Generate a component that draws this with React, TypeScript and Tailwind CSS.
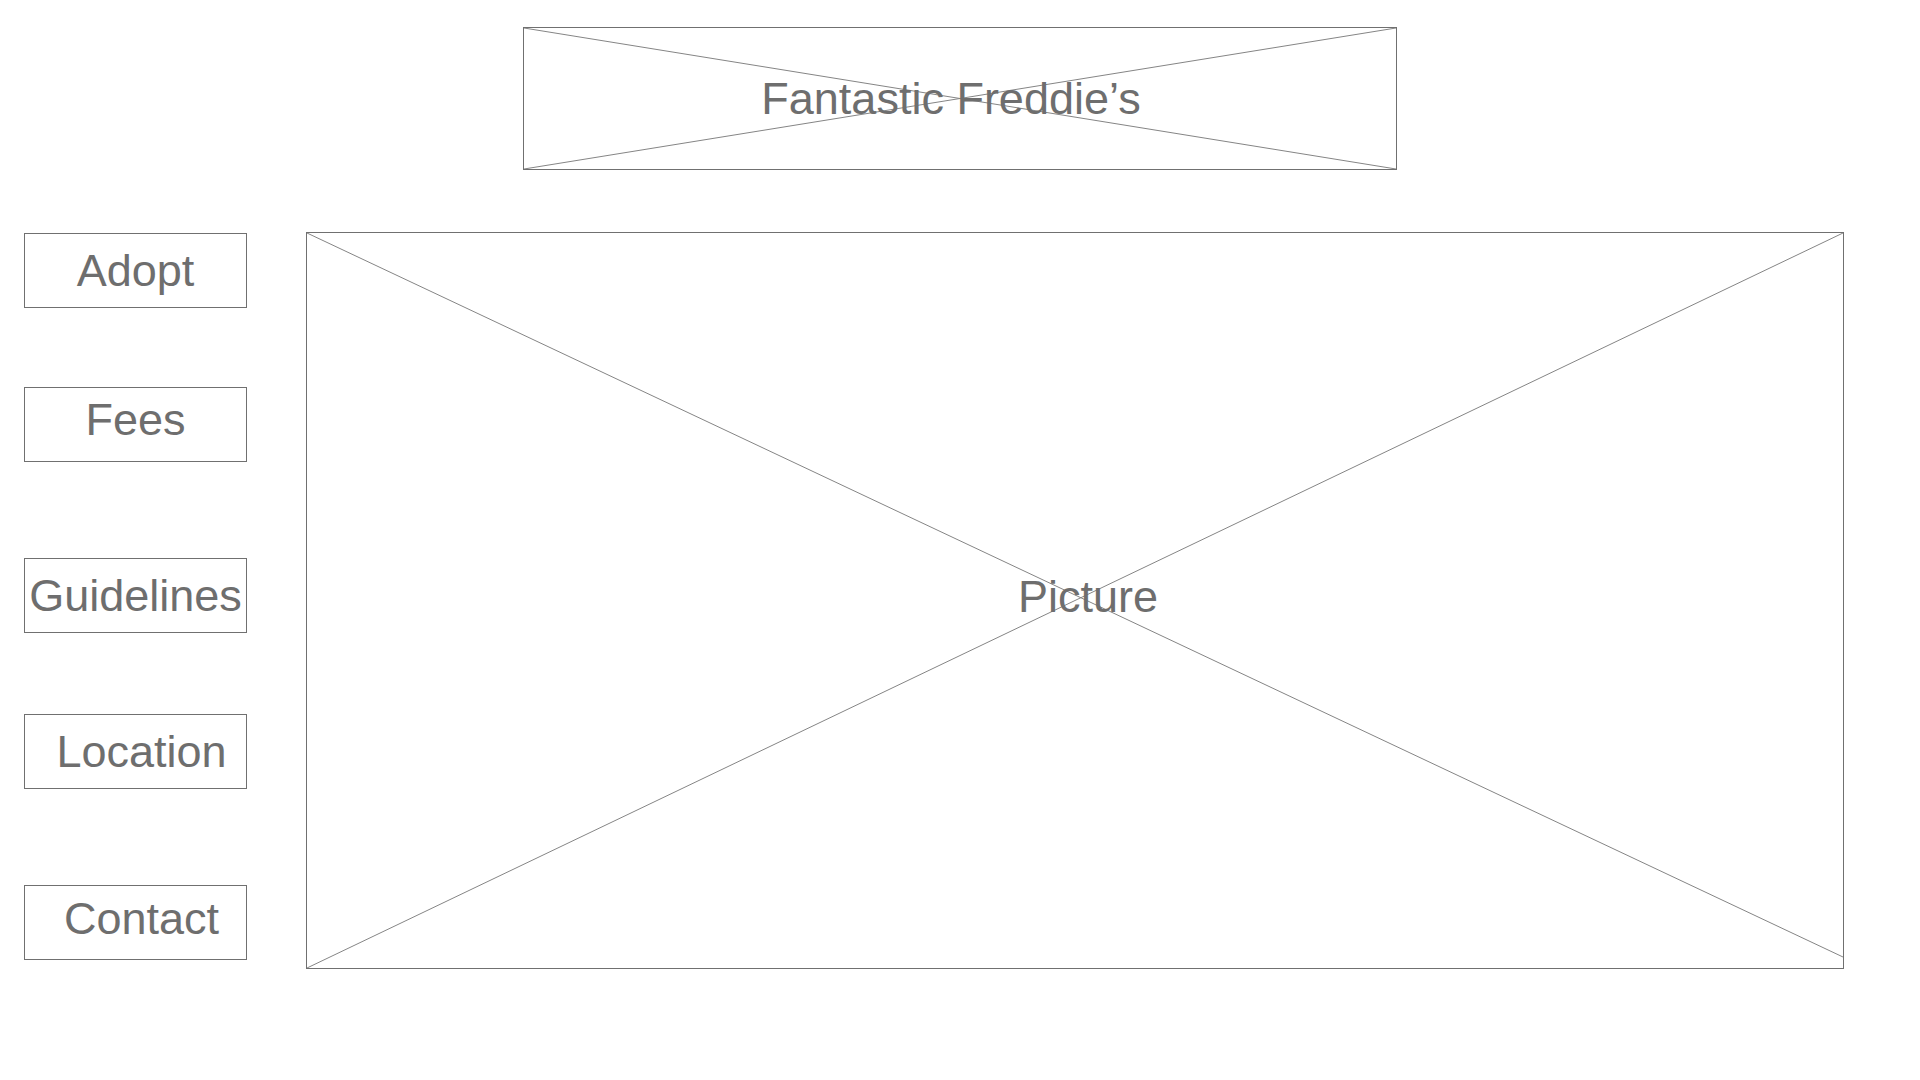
import React from "react";

const font = { fontFamily: '"Liberation Sans", Arial, Helvetica, sans-serif' };

function Cross({ w, h, endY }: { w: number; h: number; endY?: number }) {
  return (
    <svg
      className="absolute inset-0 pointer-events-none"
      width="100%"
      height="100%"
      viewBox={`0 0 ${w} ${h}`}
      preserveAspectRatio="none"
    >
      <line x1="0" y1="0" x2={w} y2={endY ?? h} stroke="#858585" strokeWidth="1" />
      <line x1="0" y1={h} x2={w} y2="0" stroke="#858585" strokeWidth="1" />
    </svg>
  );
}

function NavBox({ label, className }: { label: string; className: string }) {
  return (
    <div
      className={`h-[75px] w-[223px] border border-[#707070] flex items-center justify-center text-[45px] leading-none text-[#6e6e6e] whitespace-nowrap ${className}`}
    >
      {label}
    </div>
  );
}

export default function App() {
  return (
    <div className="min-h-[1080px] w-[1920px] bg-white pt-[27px]" style={font}>
      <div className="relative ml-[523px] w-[874px] h-[143px] border border-[#707070]">
        <Cross w={872} h={141} />
        <div className="relative h-full flex items-center justify-center pr-[18px] text-[45px] leading-none text-[#6e6e6e] whitespace-nowrap">
          Fantastic Freddie’s
        </div>
      </div>

      <div className="flex mt-[62px]">
        <div className="ml-[24px] w-[223px] flex flex-col">
          <NavBox label="Adopt" className="mt-[1px]" />
          <NavBox label="Fees" className="mt-[79px] pb-[10px]" />
          <NavBox label="Guidelines" className="mt-[96px]" />
          <NavBox label="Location" className="mt-[81px] pl-[12px]" />
          <NavBox label="Contact" className="mt-[96px] pl-[12px] pb-[8px]" />
        </div>

        <div className="relative ml-[59px] w-[1538px] h-[737px] border border-[#707070]">
          <Cross w={1536} h={735} endY={724} />
          <div className="relative h-full flex items-center justify-center pl-[26px] pb-[8px] text-[45px] leading-none text-[#6e6e6e]">
            Picture
          </div>
        </div>
      </div>
    </div>
  );
}
